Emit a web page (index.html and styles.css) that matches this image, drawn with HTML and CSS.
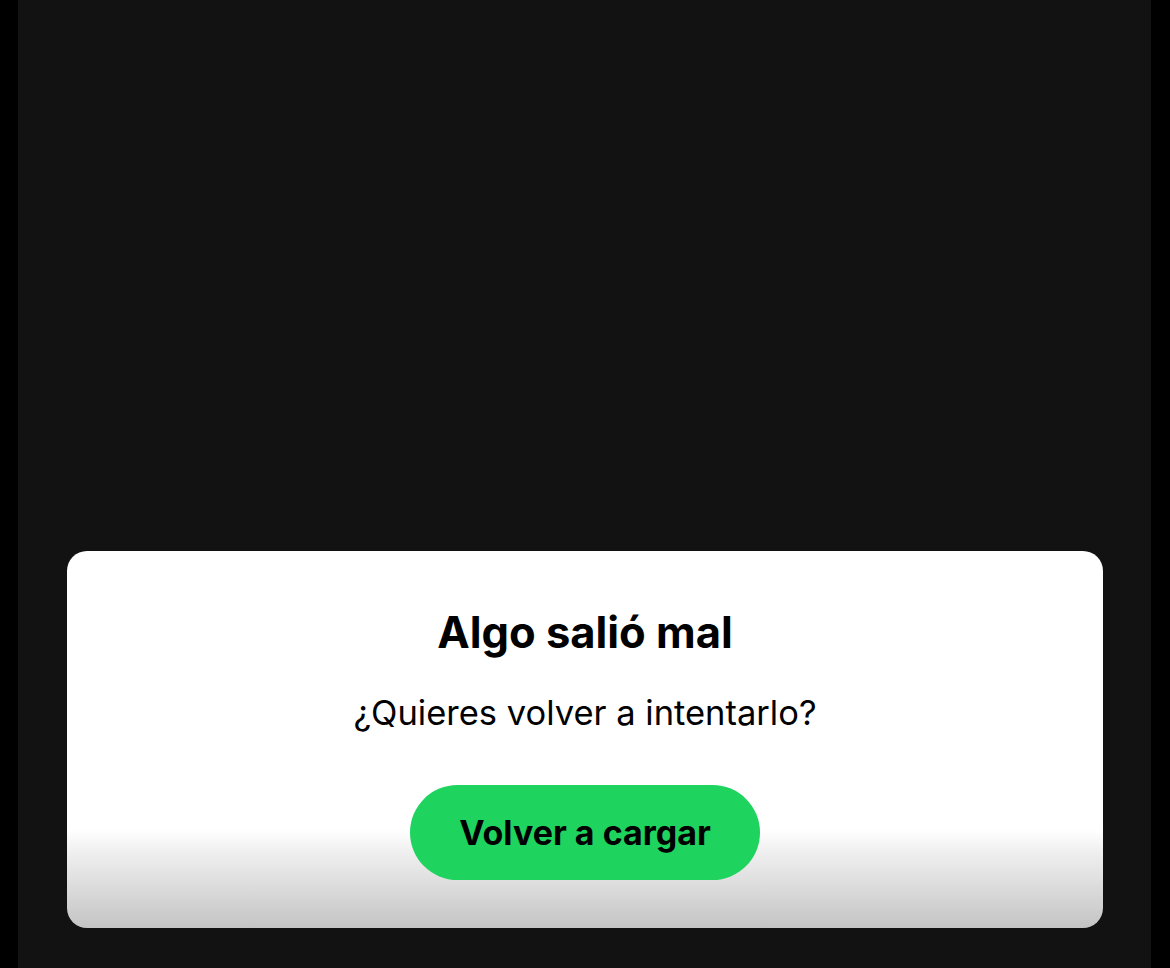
FILE: index.html
```html
<!DOCTYPE html>
<html lang="es">
<head>
<meta charset="utf-8">
<link rel="stylesheet" href="styles.css">
</head>
<body>
<div class="screen">
  <div class="dialog">
    <h1 class="title">Algo salió mal</h1>
    <p class="message">¿Quieres volver a intentarlo?</p>
    <button class="reload">Volver a cargar</button>
  </div>
</div>
</body>
</html>
```
FILE: styles.css
```css
html, body {
  margin: 0;
  padding: 0;
  height: 100%;
  background: #000;
}
body {
  padding: 0 19px 0 18px;
  box-sizing: border-box;
  font-family: "Inter", "Liberation Sans", sans-serif;
}
.screen {
  height: 968px;
  background: #121212;
  display: flex;
  flex-direction: column;
  justify-content: flex-end;
  padding: 0 48px 40px 49px;
  box-sizing: border-box;
}
.dialog {
  height: 377px;
  box-sizing: border-box;
  border-radius: 20px;
  background: linear-gradient(to bottom, #ffffff 0, #ffffff 279px, #f0f0f0 300px, #c4c4c4 377px);
  display: flex;
  flex-direction: column;
  align-items: center;
  padding-top: 54px;
}
.title {
  margin: 0;
  font-size: 43.5px;
  line-height: 54px;
  font-weight: 700;
  color: #000;
}
.message {
  margin: 33px 0 0;
  font-size: 34.5px;
  line-height: 42px;
  font-weight: 400;
  color: #000;
}
.reload {
  margin-top: 51px;
  width: 350px;
  height: 95px;
  border: none;
  border-radius: 48px;
  background: #1fd35f;
  color: #000;
  font-family: inherit;
  font-size: 34px;
  font-weight: 700;
  padding: 0;
}
```
